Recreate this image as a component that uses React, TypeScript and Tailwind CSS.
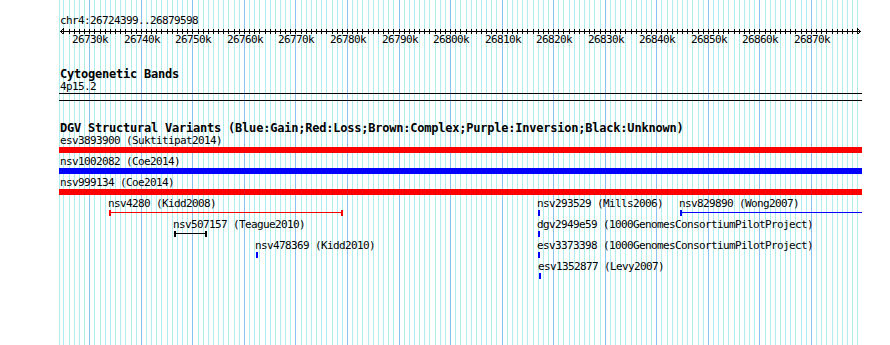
import React from 'react';

const START = 26724399;
const END = 26879598;
const SCALE = 800 / (END - START + 1);
const toX = (pos: number) => Math.round(60.4 + (pos - START) * SCALE);

// every whole kb inside the view gets a grid line and a ruler tick
const kbMarks = Array.from({ length: 160 }, (_, i) => 26720 + i).filter(
  (k) => k * 1000 >= START && k * 1000 <= END
);

type Bar = { name: string; color: string };
const wideVariants: Bar[] = [
  { name: 'esv3893900 (Suktitipat2014)', color: 'bg-[#ff0000]' },
  { name: 'nsv1002082 (Coe2014)', color: 'bg-[#0000ff]' },
  { name: 'nsv999134 (Coe2014)', color: 'bg-[#ff0000]' },
];

type Feature = {
  name: string;
  x: number;
  end: number;
  row: number;
  kind: 'span' | 'mark';
  color: string;
  capRight?: boolean;
};

const features: Feature[] = [
  { name: 'nsv4280 (Kidd2008)', x: 109, end: 343, row: 0, kind: 'span', color: '#ff0000', capRight: true },
  { name: 'nsv507157 (Teague2010)', x: 174, end: 207, row: 1, kind: 'span', color: '#000000', capRight: true },
  { name: 'nsv478369 (Kidd2010)', x: 256, end: 258, row: 2, kind: 'mark', color: '#0000ff' },
  { name: 'nsv293529 (Mills2006)', x: 538, end: 540, row: 0, kind: 'mark', color: '#0000ff' },
  { name: 'nsv829890 (Wong2007)', x: 680, end: 862, row: 0, kind: 'span', color: '#0000ff', capRight: false },
  { name: 'dgv2949e59 (1000GenomesConsortiumPilotProject)', x: 538, end: 540, row: 1, kind: 'mark', color: '#0000ff' },
  { name: 'esv3373398 (1000GenomesConsortiumPilotProject)', x: 538, end: 540, row: 2, kind: 'mark', color: '#0000ff' },
  { name: 'esv1352877 (Levy2007)', x: 539, end: 541, row: 3, kind: 'mark', color: '#0000ff' },
];

const small = 'text-[11px] leading-[12px] tracking-[-0.62px]';
const title = 'font-bold text-[12px] leading-[14px] tracking-[-0.22px]';

const Grid: React.FC = () => (
  <svg className="absolute inset-0" width={890} height={345} shapeRendering="crispEdges">
    <line x1={59.5} x2={59.5} y1={0} y2={345} stroke="#aeeeee" />
    {kbMarks.map((k) => {
      const x = toX(k * 1000) + 0.5;
      return (
        <line
          key={k}
          x1={x}
          x2={x}
          y1={0}
          y2={345}
          stroke={k % 10 === 0 ? '#87c4f0' : '#aeeeee'}
          strokeWidth={1}
        />
      );
    })}
  </svg>
);

const Ruler: React.FC = () => (
  <svg className="block" width={890} height={7} shapeRendering="crispEdges">
    <line x1={60} x2={861} y1={4.5} y2={4.5} stroke="#000" />
    {kbMarks.map((k) => {
      const x = toX(k * 1000) + 0.5;
      return <line key={k} x1={x} x2={x} y1={2} y2={7} stroke="#000" />;
    })}
    <polyline points="63.5,1.5 60.5,4.5 63.5,7.5" fill="none" stroke="#000" />
    <polyline points="857.5,1.5 860.5,4.5 857.5,7.5" fill="none" stroke="#000" />
  </svg>
);

export default function App() {
  return (
    <div className="relative w-[890px] h-[345px] overflow-hidden bg-white text-black font-['DejaVu_Sans_Mono','Liberation_Mono',monospace]">
      <Grid />

      <div className="relative flex flex-col">
        <div className={`mt-[15px] ml-[60px] ${small}`}>chr4:26724399..26879598</div>
        <Ruler />
        <div className={`relative h-[12px] ${small}`}>
          {kbMarks
            .filter((k) => k % 10 === 0)
            .map((k) => (
              <span key={k} className="absolute top-0 w-[36px] text-center" style={{ left: toX(k * 1000) - 17 }}>
                {k}k
              </span>
            ))}
        </div>

        {/* Cytogenetic bands */}
        <div className={`mt-[21px] ml-[60px] ${title}`}>Cytogenetic Bands</div>
        <div className={`ml-[60px] ${small}`}>4p15.2</div>
        <div className="ml-[59px] w-[803px] h-px bg-black" />
        <div className="ml-[59px] mt-[6px] w-[803px] h-px bg-black" />

        {/* DGV */}
        <div className={`mt-[20px] ml-[60px] whitespace-nowrap ${title}`}>
          DGV Structural Variants (Blue:Gain;Red:Loss;Brown:Complex;Purple:Inversion;Black:Unknown)
        </div>
        {wideVariants.map((v, i) => (
          <div key={v.name} className={i < wideVariants.length - 1 ? 'mb-[3px]' : ''}>
            <div className={`ml-[60px] ${small}`}>{v.name}</div>
            <div className={`ml-[59px] w-[803px] h-[6px] ${v.color}`} />
          </div>
        ))}

        <div className={`relative h-[150px] ${small}`}>
          {features.map((f) => (
            <React.Fragment key={f.name}>
              <span className="absolute whitespace-nowrap" style={{ left: f.x - 1, top: 3 + f.row * 21 }}>
                {f.name}
              </span>
              {f.kind === 'mark' ? (
                <div
                  className="absolute h-[6px]"
                  style={{ left: f.x, top: 15 + f.row * 21, width: f.end - f.x, background: f.color }}
                />
              ) : (
                <div className="absolute h-[6px]" style={{ left: f.x, top: 15 + f.row * 21, width: f.end - f.x }}>
                  <div className="absolute left-0 right-0 top-[2px] h-px" style={{ background: f.color }} />
                  <div className="absolute left-0 top-0 w-[2px] h-[6px]" style={{ background: f.color }} />
                  {f.capRight && (
                    <div className="absolute right-0 top-0 w-[2px] h-[6px]" style={{ background: f.color }} />
                  )}
                </div>
              )}
            </React.Fragment>
          ))}
        </div>
      </div>
    </div>
  );
}
